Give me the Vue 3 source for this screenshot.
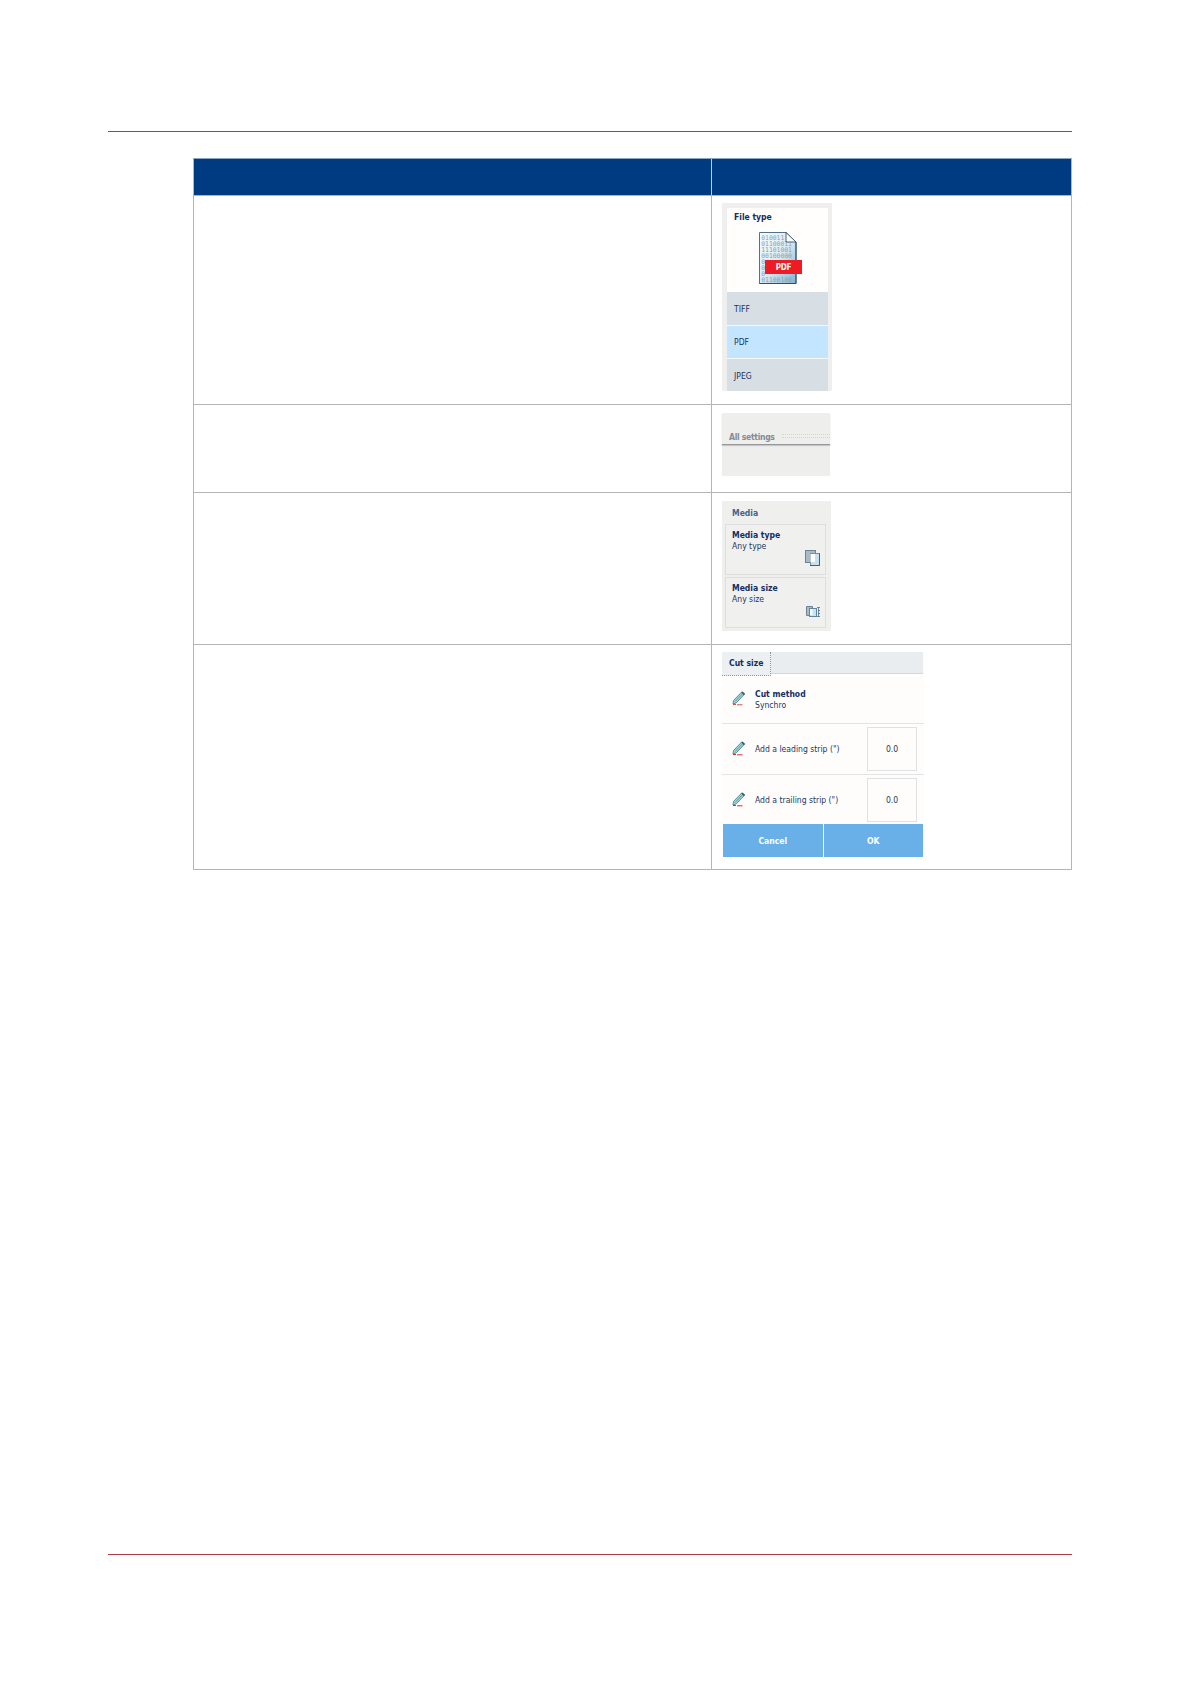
<script setup>
const fileTypes = [
  { name: 'TIFF', active: false },
  { name: 'PDF', active: true },
  { name: 'JPEG', active: false },
]
const strips = ['Add a leading strip (")', 'Add a trailing strip (")']
const bits = ['010011', '01100011', '11101001', '00100000', '0', '0', '0', '01100100']
</script>

<template>
  <div class="page">
    <div class="rule"></div>
    <div class="table">
      <div class="row head"><div class="left"></div><div class="right"></div></div>

      <div class="row r1">
        <div class="left"></div>
        <div class="right">
          <div class="filetype">
            <div class="preview">
              <b class="ft-title">File type</b>
              <svg class="doc" width="44" height="54" viewBox="0 0 44 54">
                <defs>
                  <linearGradient id="paper" x1="0" y1="0" x2="1" y2="1">
                    <stop offset="0" stop-color="#f7fbfd" />
                    <stop offset=".5" stop-color="#dcebf4" />
                    <stop offset="1" stop-color="#7fb2d6" />
                  </linearGradient>
                </defs>
                <path d="M.5 1.5H27L37 11V52.5H.5Z" fill="url(#paper)" stroke="#52718a" />
                <text v-for="(b, i) in bits" :key="i" x="2.2" :y="8.8 + i * 6" class="bits">{{ b }}</text>
                <path d="M27 1.5V11H37Z" fill="#fff" stroke="#34516c" stroke-width=".9" />
                <path d="M37 11V52.5H.5" fill="none" stroke="#2b5069" />
                <rect x="6" y="29" width="37" height="14" fill="#ed1b24" />
                <text x="16.7" y="38.9" textLength="15.8" class="pdf">PDF</text>
              </svg>
            </div>
            <div v-for="f in fileTypes" :key="f.name" class="option" :class="{ active: f.active }"><span>{{ f.name }}</span></div>
          </div>
        </div>
      </div>

      <div class="row r2">
        <div class="left"></div>
        <div class="right">
          <div class="settings">
            <div class="tab"><b>All settings</b><i class="grip"></i></div>
          </div>
        </div>
      </div>

      <div class="row r3">
        <div class="left"></div>
        <div class="right">
          <div class="media">
            <b class="media-title">Media</b>
            <div class="card">
              <b>Media type</b><span>Any type</span>
              <svg class="m-icon" width="16" height="17" viewBox="0 0 16 17">
                <rect x=".5" y=".5" width="10" height="12" fill="#a9bac7" stroke="#6d8498" />
                <rect x="5.5" y="3.5" width="9" height="12" fill="#c8dfec" stroke="#6f93ab" />
                <rect x="5.5" y="4" width="4.5" height="8" fill="#fff" />
                <path d="M14.5 3.5V15.5H5" fill="none" stroke="#3f627c" />
              </svg>
            </div>
            <div class="card">
              <b>Media size</b><span>Any size</span>
              <svg class="m-icon" width="16" height="17" viewBox="0 0 16 17">
                <path d="M1.5 3.5H7.5V12.5H1.5Z" fill="#a9bac7" stroke="#6d8498" />
                <rect x="4.5" y="5.5" width="7" height="8" fill="#c8e2f1" stroke="#5f86a1" />
                <rect x="5" y="6" width="2.5" height="6" fill="#fff" />
                <path d="M13.5 4.5V14M12 4.5H15M13 7.5H15M13 10.5H15M12 13.5H15" fill="none" stroke="#536e86" stroke-width=".8" />
              </svg>
            </div>
          </div>
        </div>
      </div>

      <div class="row r4">
        <div class="left"></div>
        <div class="right">
          <div class="cut">
            <div class="tabs"><b class="cut-tab">Cut size</b></div>
            <div class="line first">
              <svg class="pencil" width="14" height="15" viewBox="0 0 14 15">
                <path d="M1.5 9.5 9.7 1 12.5 3.2 4.3 11.8 1 13Z" fill="#a4d6d8" stroke="#4b8388" stroke-width=".9" />
                <path d="M9.2 1.5 10.5.6 13 2.8 11.8 4.3Z" fill="#315f65" />
                <path d="M3 10.5 10.7 2.6" stroke="#477b80" stroke-width=".7" />
                <path d="M1 13.5H4M5 13.8H10.5" stroke="#cf5353" stroke-width="1" />
              </svg>
              <div class="names"><b>Cut method</b><span>Synchro</span></div>
            </div>
            <div v-for="(s, i) in strips" :key="s" class="line" :class="'strip' + i">
              <svg class="pencil" width="14" height="15" viewBox="0 0 14 15">
                <path d="M1.5 9.5 9.7 1 12.5 3.2 4.3 11.8 1 13Z" fill="#a4d6d8" stroke="#4b8388" stroke-width=".9" />
                <path d="M9.2 1.5 10.5.6 13 2.8 11.8 4.3Z" fill="#315f65" />
                <path d="M3 10.5 10.7 2.6" stroke="#477b80" stroke-width=".7" />
                <path d="M1 13.5H4M5 13.8H10.5" stroke="#d92f2f" stroke-width="1" />
              </svg>
              <span class="strip-name">{{ s }}</span>
              <div class="value">0.0</div>
            </div>
            <div class="buttons">
              <div class="btn"><b class="cancel">Cancel</b></div>
              <div class="btn"><b>OK</b></div>
            </div>
          </div>
        </div>
      </div>
    </div>
    <div class="rule bottom"></div>
  </div>
</template>

<style>
body { background: #fff; }
</style>

<style scoped>
.page {
  width: 1191px; height: 1684px; box-sizing: border-box; padding: 131px 119px 0 108px;
  display: flex; flex-direction: column; background: #fff;
  font: 8.55px/10px "DejaVu Sans", sans-serif; font-stretch: condensed; color: #1d3560;
}
.page * { box-sizing: border-box; }
b, span { white-space: nowrap; }
b { font-weight: 700; color: #122f63; }
.rule { height: 1px; background: #b03a46; flex: none; }
.rule.bottom { margin-top: auto; margin-bottom: 129px; }
.table { margin: 26px 0 0 85px; border: 1px solid #b5b5b8; border-top-color: #8aa5c4; width: 879px; flex: none; }
.row { display: flex; border-top: 1px solid #b5b5b8; }
.left { width: 517px; flex: none; }
.right { flex: 1; border-left: 1px solid #b5b5b8; padding-left: 10px; }
.head { height: 36px; border-top: 0; background: #003a81; }
.head .right { border-left-color: #b9cde0; }
.r1 { height: 209px; border-top-color: #a3b5c9; }
.r2 { height: 88px; }
.r3 { height: 152px; }
.r4 { height: 225px; }

.filetype { width: 110px; height: 188px; margin-top: 7px; padding: 5px 4px 0 5px; background: #eeefee; }
.preview { height: 84px; background: #fffefc; display: flex; flex-direction: column; padding: 4px 0 0 7px; }
.doc { margin: 9px 0 0 25px; flex: none; }
.bits { font: 6.4px "DejaVu Sans Mono", monospace; fill: #8ba1b2; }
.pdf { font: bold 8px "DejaVu Sans", sans-serif; font-stretch: condensed; fill: #fff; }
.option { height: 33px; background: #d7dee4; padding: 12px 0 0 7px; }
.option.active { height: 34px; padding-top: 11px; background: #c4e5ff; border: solid #f4f9fc; border-width: 1px 0; }
.option:last-child { height: 32px; }

.settings { width: 108px; height: 63px; margin-top: 8px; background: #eeeeed; }
.tab { height: 32px; border-bottom: 1px solid #969899; box-shadow: 0 1px 1px #c5c6c7; padding: 19px 0 0 7px; display: flex; }
.tab b { color: #848b92; width: 46px; letter-spacing: -.3px; }
.grip { flex: 1; height: 4px; margin: 2px 0 0 7px; border: dotted #d3d3d1; border-width: 1px 0; }

.media { width: 109px; height: 130px; margin-top: 8px; padding: 7px 0 0 3px; background: #efefed; }
.media-title { display: block; height: 16px; padding-left: 7px; color: #46638a; }
.card { position: relative; width: 101px; height: 51px; border: 1px solid #dcdedf; background: #f0f0ee; margin-bottom: 2px; padding: 5px 0 0 6px; display: flex; flex-direction: column; }
.card b { height: 11px; }
.m-icon { position: absolute; right: 4px; bottom: 7px; }

.cut { width: 202px; height: 205px; margin-top: 7px; background: #fefdfc; display: flex; flex-direction: column; }
.tabs { height: 22px; width: 201px; background: #e9edf0; border-bottom: 1px solid #d3d7da; flex: none; }
.cut-tab { display: block; width: 49px; height: 24px; padding: 6px 0 0 7px; background: #edf0f2; border: dotted #8d98a3; border-width: 0 1px 1px 0; }
.line { display: flex; height: 51px; border-top: 1px solid #e3e4e6; flex: none; }
.line.first { height: 49px; border-top: 0; }
.pencil { margin: 17px 9px 0 10px; flex: none; }
.names { display: flex; flex-direction: column; padding-top: 15px; }
.names b { height: 11px; }
.strip-name { width: 112px; padding-top: 20px; flex: none; }
.value { width: 50px; height: 44px; margin-top: 3px; border: 1px solid #dfe1e3; text-align: center; line-height: 43px; color: #27364f; }
.strip1 { height: 50px; }
.buttons { display: flex; gap: 1px; height: 33px; padding: 0 1px; flex: none; }
.btn { flex: 1; background: #69b0e8; text-align: center; line-height: 34px; }
.btn b { color: #fff; }
</style>
